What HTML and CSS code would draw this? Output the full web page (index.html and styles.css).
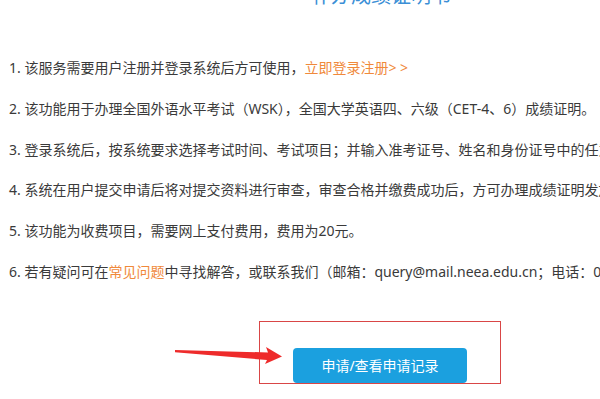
FILE: index.html
```html
<!DOCTYPE html>
<html lang="zh-CN">
<head>
<meta charset="utf-8">
<title>补办成绩证明书</title>
<link rel="stylesheet" href="styles.css">
</head>
<body>
<div class="page">
  <h1 class="title">补办成绩证明书</h1>
  <div class="notes">
    <p>1. 该服务需要用户注册并登录系统后方可使用，<a class="link" href="#">立即登录注册&gt; &gt;</a></p>
    <p>2. 该功能用于办理全国外语水平考试（WSK），全国大学英语四、六级（CET-4、6）成绩证明。</p>
    <p>3. 登录系统后，按系统要求选择考试时间、考试项目；并输入准考证号、姓名和身份证号中的任意两项进行查询。</p>
    <p>4. 系统在用户提交申请后将对提交资料进行审查，审查合格并缴费成功后，方可办理成绩证明发放。</p>
    <p>5. 该功能为收费项目，需要网上支付费用，费用为20元。</p>
    <p>6. 若有疑问可在<a class="link" href="#">常见问题</a>中寻找解答，或联系我们（邮箱：query@mail.neea.edu.cn；电话：010-82345675）。</p>
  </div>
  <div class="action">
    <div class="highlight">
      <button class="apply">申请/查看申请记录</button>
    </div>
  </div>
  <svg class="arrow" viewBox="0 0 120 30" width="120" height="30">
    <polygon points="5,10 98,12.5 96,7 112,16.5 95,24 97,20 5,12.2" fill="#ee2b2b"/>
  </svg>
</div>
</body>
</html>
```

FILE: styles.css
```css
html, body {
  margin: 0;
  padding: 0;
  background: #ffffff;
  overflow: hidden;
}
body {
  width: 600px;
  height: 399px;
  font-family: "Noto Sans", "Noto Sans CJK SC", sans-serif;
}
.page {
  position: relative;
  width: 762px;
  padding-top: 1px;
  margin-top: -1px;
}
.title {
  margin: -18px 0 0 0;
  font-size: 20px;
  line-height: 28px;
  font-weight: normal;
  text-align: center;
  color: #3b8fd6;
}
.notes {
  padding: 38px 0 0 9px;
}
.notes p {
  margin: 0;
  font-size: 14px;
  line-height: 40.8px;
  color: #3a3a3a;
  white-space: nowrap;
}
.link {
  color: #f0893b;
  text-decoration: none;
}
.action {
  display: flex;
  justify-content: center;
  margin-top: 28px;
  padding-right: 2px;
}
.highlight {
  box-sizing: border-box;
  width: 242px;
  height: 63px;
  border: 1px solid #d94646;
  padding-top: 26px;
  display: flex;
  justify-content: center;
  align-items: flex-start;
}
.apply {
  width: 174px;
  height: 35px;
  border: none;
  border-radius: 4px;
  background: #1ba0df;
  color: #ffffff;
  font-family: "Noto Sans", "Noto Sans CJK SC", sans-serif;
  font-size: 14px;
  padding: 0;
}
.arrow {
  position: absolute;
  left: 170px;
  top: 341px;
}
```
